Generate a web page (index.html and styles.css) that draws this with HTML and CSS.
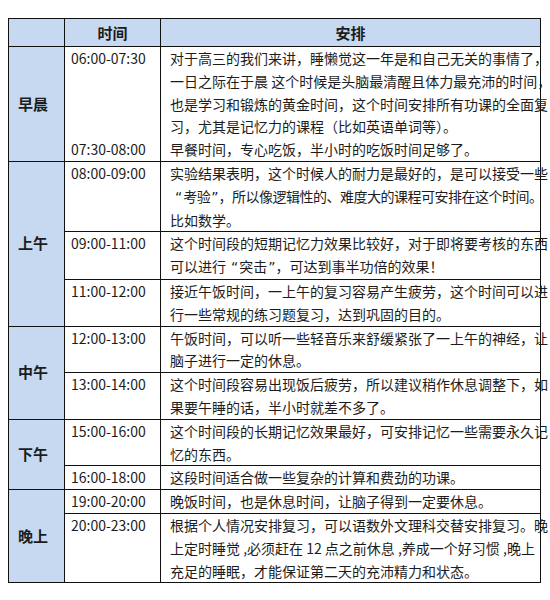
FILE: index.html
```html
<!DOCTYPE html>
<html lang="zh-CN">
<head>
<meta charset="utf-8">
<link rel="stylesheet" href="styles.css">
</head>
<body>
<table class="plan">
  <colgroup>
    <col class="c-period">
    <col class="c-time">
    <col class="c-desc">
  </colgroup>
  <thead>
    <tr>
      <th class="head"></th>
      <th class="head">时间</th>
      <th class="head">安排</th>
    </tr>
  </thead>
  <tbody>
    <tr>
      <th class="period">早晨</th>
      <td class="time">06:00-07:30<br><br><br><br>07:30-08:00</td>
      <td class="desc">对于高三的我们来讲，睡懒觉这一年是和自己无关的事情了，<br>一日之际在于晨 这个时候是头脑最清醒且体力最充沛的时间，<br>也是学习和锻炼的黄金时间，这个时间安排所有功课的全面复<br>习，尤其是记忆力的课程（比如英语单词等）。<br>早餐时间，专心吃饭，半小时的吃饭时间足够了。</td>
    </tr>
    <tr>
      <th class="period" rowspan="3">上午</th>
      <td class="time">08:00-09:00</td>
      <td class="desc">实验结果表明，这个时候人的耐力是最好的，是可以接受一些<br><span class="q qo">“</span><span class="tight">考验</span><span class="q qc">”</span><span class="tight">，所以像逻辑性的、难度大的课程可安排在这个时间。</span><br>比如数学。</td>
    </tr>
    <tr>
      <td class="time">09:00-11:00</td>
      <td class="desc">这个时间段的短期记忆力效果比较好，对于即将要考核的东西<br>可以进行<span class="q qo">“</span>突击<span class="q qc">”</span>，可达到事半功倍的效果！</td>
    </tr>
    <tr>
      <td class="time">11:00-12:00</td>
      <td class="desc">接近午饭时间，一上午的复习容易产生疲劳，这个时间可以进<br>行一些常规的练习题复习，达到巩固的目的。</td>
    </tr>
    <tr>
      <th class="period" rowspan="2">中午</th>
      <td class="time">12:00-13:00</td>
      <td class="desc">午饭时间，可以听一些轻音乐来舒缓紧张了一上午的神经，让<br>脑子进行一定的休息。</td>
    </tr>
    <tr>
      <td class="time">13:00-14:00</td>
      <td class="desc">这个时间段容易出现饭后疲劳，所以建议稍作休息调整下，如<br>果要午睡的话，半小时就差不多了。</td>
    </tr>
    <tr>
      <th class="period" rowspan="2">下午</th>
      <td class="time">15:00-16:00</td>
      <td class="desc">这个时间段的长期记忆效果最好，可安排记忆一些需要永久记<br>忆的东西。</td>
    </tr>
    <tr>
      <td class="time">16:00-18:00</td>
      <td class="desc">这段时间适合做一些复杂的计算和费劲的功课。</td>
    </tr>
    <tr>
      <th class="period" rowspan="2">晚上</th>
      <td class="time">19:00-20:00</td>
      <td class="desc">晚饭时间，也是休息时间，让脑子得到一定要休息。</td>
    </tr>
    <tr>
      <td class="time">20:00-23:00</td>
      <td class="desc">根据个人情况安排复习，可以语数外文理科交替安排复习。晚<br>上定时睡觉 ,必须赶在 12 点之前休息 ,养成一个好习惯 ,晚上<br>充足的睡眠，才能保证第二天的充沛精力和状态。</td>
    </tr>
  </tbody>
</table>
</body>
</html>
```

FILE: styles.css
```css
html, body {
  margin: 0;
  padding: 0;
  background: #ffffff;
}

body {
  font-family: "Noto Sans CJK SC", "Noto Sans", sans-serif;
  color: #1c1c1c;
}

.plan {
  margin: 18px 0 0 8px;
  border-collapse: collapse;
  table-layout: fixed;
  width: 532px;
  border: 1px solid #111;
}

.c-period { width: 56px; }
.c-time { width: 96px; }
.c-desc { width: 380px; }

.plan th,
.plan td {
  border: 1px solid #111;
  padding: 0;
  vertical-align: top;
  font-size: 14px;
  line-height: 22.8px;
}

.plan .head {
  background: #c6d9f0;
  height: 27px;
  vertical-align: middle;
  text-align: center;
  font-size: 15px;
  font-weight: bold;
  line-height: 20px;
}

.plan .period {
  background: #c6d9f0;
  vertical-align: middle;
  text-align: left;
  padding-left: 9px;
  font-size: 15px;
  font-weight: bold;
}

.plan .time {
  padding-left: 6px;
  white-space: nowrap;
}

.plan .desc {
  padding-left: 9px;
  white-space: nowrap;
}

.q {
  font-family: "DejaVu Sans", sans-serif;
}

.qo {
  padding-left: 5px;
  padding-right: 1px;
}

.qc {
  padding-left: 1px;
}

.tight {
  letter-spacing: -0.5px;
}
```
